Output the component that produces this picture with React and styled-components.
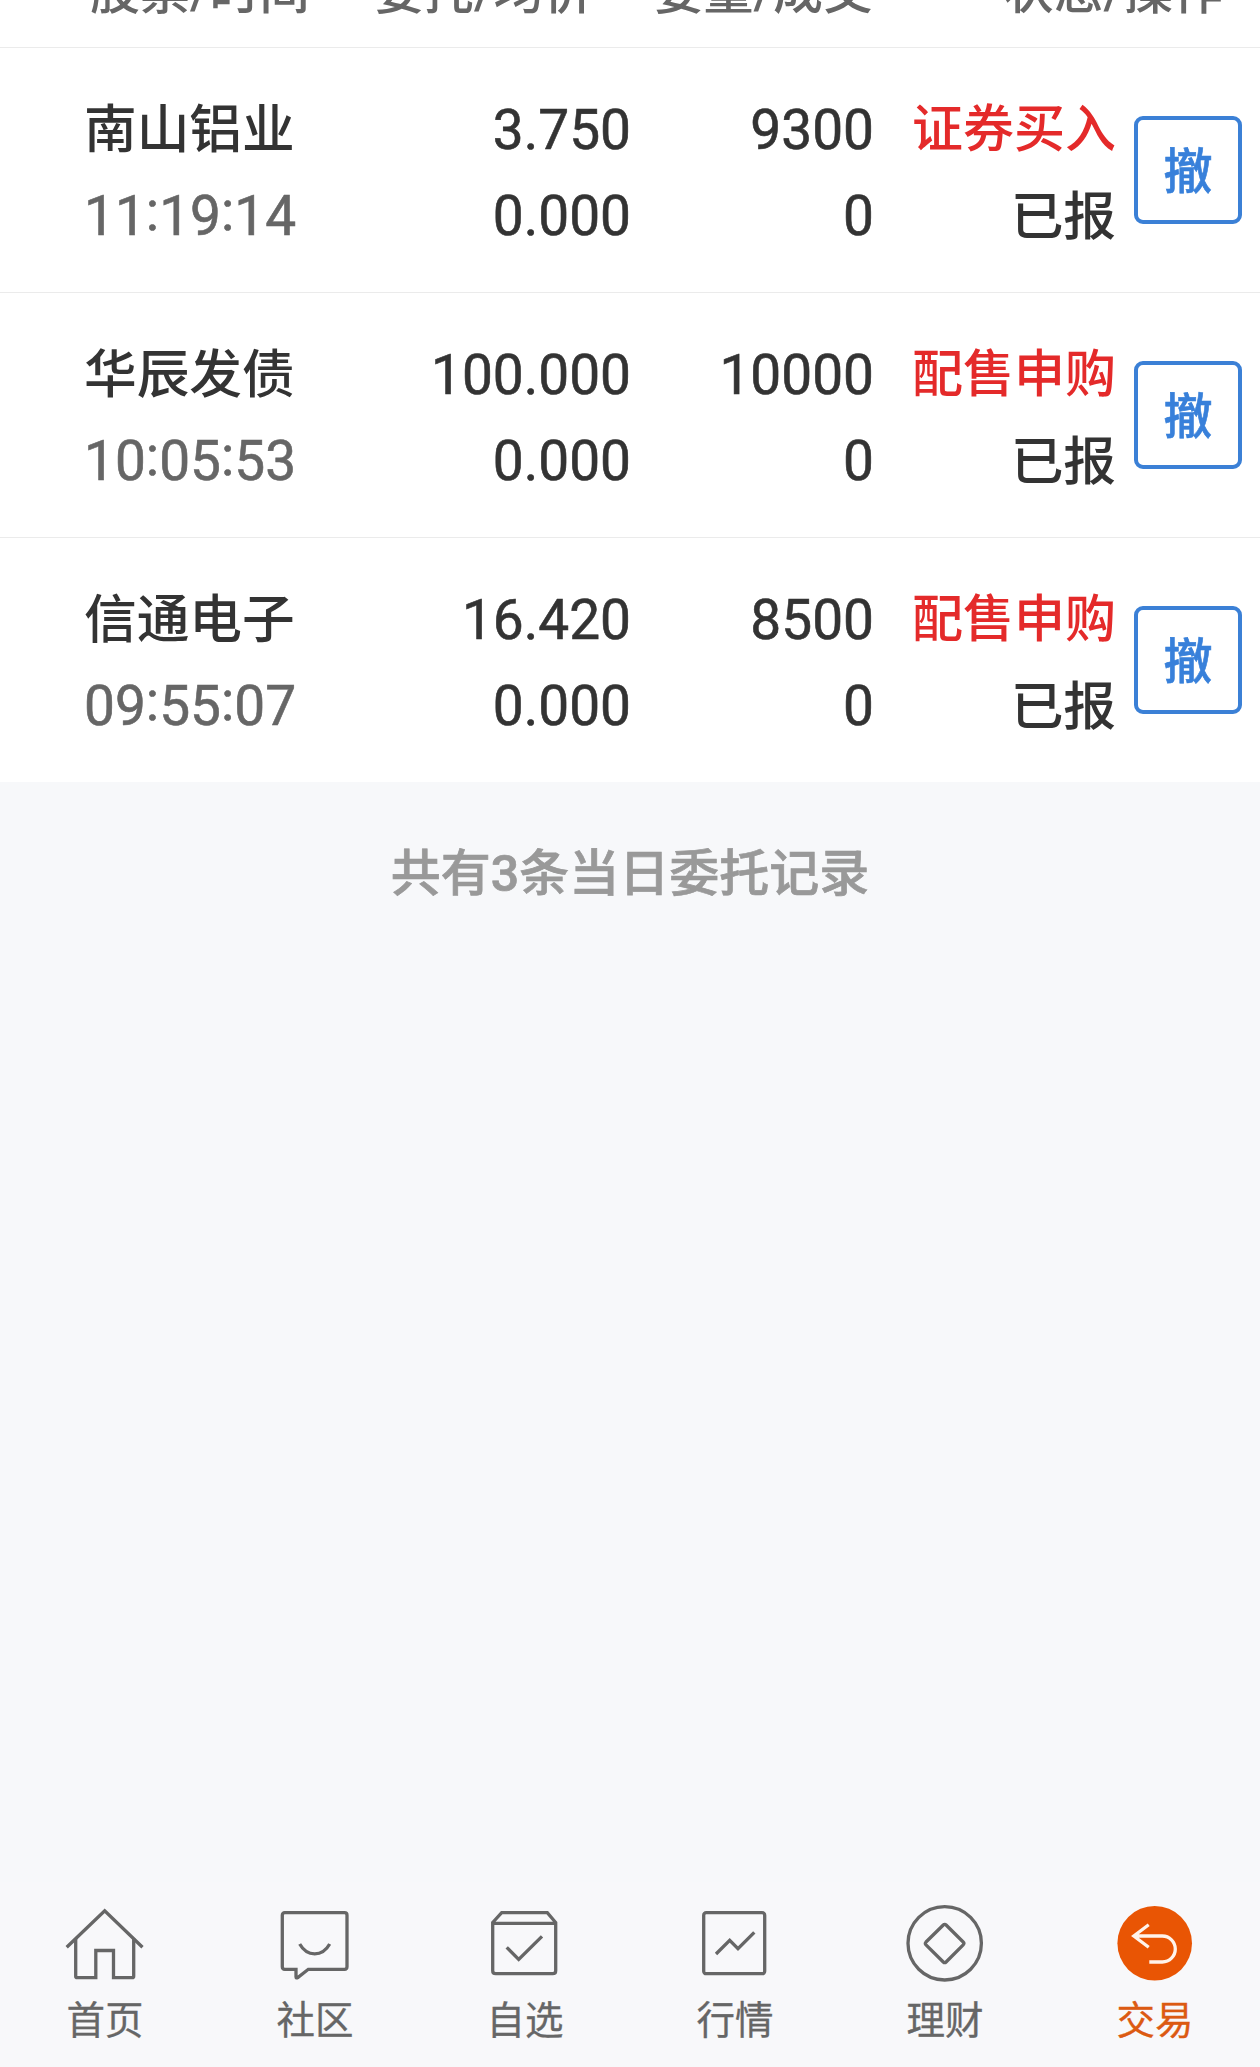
import React, { useState } from 'react';
import styled, { createGlobalStyle } from 'styled-components';

const orderList = [
    { id: 1, name: "南山铝业", time: "11:19:14", price: "3.750", avg: "0.000", amount: "9300", deal: "0", type: "证券买入", status: "已报" },
    { id: 2, name: "华辰发债", time: "10:05:53", price: "100.000", avg: "0.000", amount: "10000", deal: "0", type: "配售申购", status: "已报" },
    { id: 3, name: "信通电子", time: "09:55:07", price: "16.420", avg: "0.000", amount: "8500", deal: "0", type: "配售申购", status: "已报" },
];

const HomeIcon = () => (
    <Icon viewBox="0 0 80 80">
        <path d="M1.7 45.3 39.7 8.7 77.5 45.3" />
        <path d="M10.7 36.5V74.2Q10.7 75.7 12.2 75.7H30.8V48.5H48.5V75.7H67.2Q68.7 75.7 68.7 74.2V36.5" />
    </Icon>
);

const ChatIcon = () => (
    <Icon viewBox="0 0 80 80">
        <path d="M9.8 10.7H69.5Q72 10.7 72 13.2V64.8Q72 67.3 69.5 67.3H33.3L22.8 75.6Q21 76.6 21 74.8V67.3H9.8Q7.3 67.3 7.3 64.8V13.2Q7.3 10.7 9.8 10.7Z" />
        <path d="M24.7 42Q30.2 51.8 39.7 51.8T54.7 42" />
    </Icon>
);

const FavorIcon = () => (
    <Icon viewBox="0 0 80 80">
        <path d="M7.7 20.5 16.7 10.7H62.3L70.7 20.5V68.7Q70.7 71.7 67.7 71.7H10.7Q7.7 71.7 7.7 68.7ZM7.7 21.3H70.7" />
        <path d="M21.7 45.3 33.7 57.5 57 34.3" />
    </Icon>
);

const MarketIcon = () => (
    <Icon viewBox="0 0 80 80">
        <rect x="8.7" y="10.7" width="61" height="61" rx="2.5" />
        <path d="M21 52 34.7 38.3 43 46.7 59.3 30.3" />
    </Icon>
);

const FinanceIcon = () => (
    <Icon viewBox="0 0 80 80">
        <circle cx="39.7" cy="41.3" r="36.7" />
        <path d="M38.3 23 21 40Q19.7 41.4 21 42.8L38.3 60Q39.7 61.4 41.1 60L58.2 42.8Q59.6 41.4 58.2 40L41.1 23Q39.7 21.6 38.3 23Z" />
    </Icon>
);

const TradeIcon = () => (
    <Icon viewBox="0 0 80 80">
        <circle cx="39.7" cy="41.3" r="37.3" fill="#e95504" stroke="none" />
        <path stroke="#fff4ec" d="M33.7 22.7 18.8 34 33.7 45.3M18.8 34H47.3A13 13 0 0 1 47.3 60H34.3" />
    </Icon>
);

const tabs = [
    { label: "首页", icon: HomeIcon },
    { label: "社区", icon: ChatIcon },
    { label: "自选", icon: FavorIcon },
    { label: "行情", icon: MarketIcon },
    { label: "理财", icon: FinanceIcon },
    { label: "交易", icon: TradeIcon },
];

const App = () => {
    const [current, setCurrent] = useState("交易");

    return (
        <Container>
            <GlobalStyle />
            <Header>
                <HeadCell>股票/时间</HeadCell>
                <HeadCell>委托/均价</HeadCell>
                <HeadCell>委量/成交</HeadCell>
                <HeadCell>状态/操作</HeadCell>
            </Header>
            {orderList.map((order) => (
                <Row key={order.id}>
                    <Stock>
                        <Name>{order.name}</Name>
                        <Time>
                            {order.time.split(":").map((part, i) => (
                                <React.Fragment key={i}>
                                    {i > 0 && <Colon>:</Colon>}
                                    {part}
                                </React.Fragment>
                            ))}
                        </Time>
                    </Stock>
                    <NumberCell>
                        <div>{order.price}</div>
                        <div>{order.avg}</div>
                    </NumberCell>
                    <NumberCell>
                        <div>{order.amount}</div>
                        <div>{order.deal}</div>
                    </NumberCell>
                    <StatusCell>
                        <Type>{order.type}</Type>
                        <div>{order.status}</div>
                    </StatusCell>
                    <CancelButton>撤</CancelButton>
                </Row>
            ))}
            <Summary>共有{orderList.length}条当日委托记录</Summary>
            <TabBar>
                {tabs.map(({ label, icon: TabIcon }) => (
                    <Tab key={label} $active={label === current} onClick={() => setCurrent(label)}>
                        <TabIcon />
                        <TabLabel>{label}</TabLabel>
                    </Tab>
                ))}
            </TabBar>
        </Container>
    );
};

export default App;

const GlobalStyle = createGlobalStyle`
    * {
        box-sizing: border-box;
    }
    body {
        margin: 0;
        background: #f7f8fa;
    }
`

const Container = styled.div`
    width: 1260px;
    height: 2067px;
    display: flex;
    flex-direction: column;
    overflow: hidden;
    color: #333;
    font-family: Roboto, "Noto Sans CJK SC", sans-serif;
`

// the list is scrolled, only the lower edge of the header is left
const Header = styled.div`
    flex: none;
    height: 48px;
    padding: 0 37px 19px 90px;
    display: grid;
    grid-template-columns: 284px 216px 283px 350px;
    align-content: end;
    background: #fff;
    border-bottom: 1px solid #ebebeb;
`

const HeadCell = styled.div`
    height: 72px;
    line-height: 72px;
    color: #666;
    font-size: 50px;
    font-weight: 500;
    white-space: nowrap;

    &:nth-child(n + 3) {
        text-align: right;
    }
`

const Row = styled.div`
    flex: none;
    height: 245px;
    padding: 38px 18px 0 84px;
    display: grid;
    grid-template-columns: 247px 300px 243px 242px 126px;
    line-height: 86px;
    background: #fff;
    border-bottom: 1px solid #ebebeb;

    &:nth-of-type(4) {
        height: 244px;
        border-bottom: none;
    }
`

const Stock = styled.div`
    white-space: nowrap;
`

const Name = styled.div`
    height: 86px;
    padding-top: 1px;
    font-size: 52.7px;
    font-weight: 500;
`

const Time = styled.div`
    height: 86px;
    padding-top: 1px;
    color: #666;
    font-size: 55px;
    -webkit-text-stroke: 0.6px;
`

const Colon = styled.span`
    line-height: 1;
    vertical-align: 5px;
`

const NumberCell = styled.div`
    padding-top: 1px;
    font-size: 55px;
    text-align: right;
    -webkit-text-stroke: 0.6px;
`

const StatusCell = styled.div`
    padding-top: 1px;
    font-size: 52.7px;
    font-weight: 500;
    text-align: right;
    white-space: nowrap;
`

const Type = styled.div`
    height: 87px;
    color: #e42a2a;
    font-size: 51px;
`

const CancelButton = styled.button`
    justify-self: end;
    width: 108px;
    height: 108px;
    margin-top: 30px;
    padding: 0 0 4px;
    border: 4px solid #3b80d6;
    border-radius: 9px;
    background: #fff;
    color: #3880da;
    font-family: "Noto Sans CJK SC", sans-serif;
    font-size: 49px;
    font-weight: 500;
    line-height: 96px;
    -webkit-text-stroke: 0.6px;
`

const Summary = styled.div`
    flex: 1;
    padding-top: 55px;
    color: #999;
    font-size: 50px;
    font-weight: 500;
    line-height: 74px;
    text-align: center;
    -webkit-text-stroke: 0.7px;
`

const TabBar = styled.div`
    flex: none;
    height: 185px;
    padding-top: 20px;
    display: grid;
    grid-template-columns: repeat(6, 1fr);
    background: #f8f8fa;
`

const Tab = styled.div`
    display: flex;
    flex-direction: column;
    align-items: center;
    color: ${({ $active }) => ($active ? "#dc5a12" : "#666")};
`

const TabLabel = styled.div`
    margin-top: 7px;
    font-family: "Noto Sans CJK SC", sans-serif;
    font-size: 38.5px;
    line-height: 56px;
    -webkit-text-stroke: 0.3px;
`

const Icon = styled.svg`
    width: 80px;
    height: 80px;
    fill: none;
    stroke: #666;
    stroke-width: 3.3;
`
